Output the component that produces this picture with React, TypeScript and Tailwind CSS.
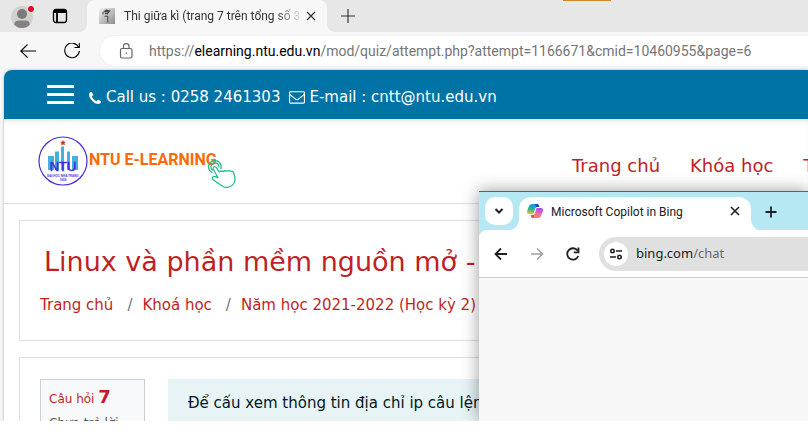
import type { ReactNode } from "react";

function Icon({ className, children, width = 1.2 }: { className: string; children: ReactNode; width?: number }) {
  return (
    <svg className={className} viewBox="0 0 16 16" fill="none" stroke="currentColor" strokeWidth={width} aria-hidden="true">
      {children}
    </svg>
  );
}

function PhoneIcon() {
  return (
    <svg className="ml-[15px] h-3 w-3 shrink-0" viewBox="0 0 1408 1408" fill="currentColor" aria-hidden="true">
      <path d="M1408 1112q0 27-10 70.500t-21 68.500q-21 50-122 106-94 51-186 51-27 0-53-3.500t-57.500-12.500-47-14.500-55.500-20.500-49-18q-98-35-175-83-127-79-264-216t-216-264q-48-77-83-175-3-9-18-49t-20.500-55.500-14.500-47-12.500-57.500-3.500-53q0-92 51-186 56-101 106-122 25-11 68.500-21t70.500-10q14 0 21 3 18 6 53 76 11 19 30 54t35 63.500 31 53.500q3 4 17.500 25t21.500 35.500 7 28.500q0 20-28.500 50t-62 55-62 53-28.500 46q0 9 5 22.500t8.500 20.500 14 24 11.500 19q76 137 174 235t235 174q2 1 19 11.500t24 14 20.500 8.500 22.500 5q18 0 46-28.500t53-62 55-62 50-28.500q14 0 28.500 7t35.500 21.500 25 17.500q25 15 53.500 31t63.500 35 54 30q70 35 76 53 3 7 3 21z" />
    </svg>
  );
}

function EnvelopeIcon() {
  return (
    <svg className="ml-[9px] h-4 w-4 shrink-0" viewBox="0 128 1792 1792" fill="currentColor" aria-hidden="true">
      <path d="M1664 1504v-768q-32 36-69 66-268 206-426 338-51 43-83 67t-86.500 48.500-102.500 24.500h-2q-48 0-102.500-24.500t-86.500-48.500-83-67q-158-132-426-338-37-30-69-66v768q0 13 9.500 22.500t22.500 9.500h1472q13 0 22.500-9.500t9.500-22.500zm0-1051v-24.500l-.5-13-3-12.500-5.500-9-9-7.500-14-2.500h-1472q-13 0-22.500 9.500t-9.500 22.500q0 168 147 284 193 152 401 317 6 5 35 29.500t46 37.500 44.500 31.500 50.500 27.500 43 9h2q20 0 43-9t50.500-27.500 44.500-31.500 46-37.500 35-29.500q208-165 401-317 54-43 100.500-115.500t46.500-131.500zm128-37v1088q0 66-47 113t-113 47h-1472q-66 0-113-47t-47-113v-1088q0-66 47-113t113-47h1472q66 0 113 47t47 113z" />
    </svg>
  );
}

function ProfileIcon() {
  return (
    <svg className="h-6 w-6" viewBox="0 0 24 24" aria-hidden="true">
      <circle cx="11" cy="13" r="11" fill="#d2d0cc" />
      <circle cx="11" cy="10" r="5" fill="#7c7a78" />
      <path d="M3 20.500 Q4 16.500 7 16.500 H15 Q18 16.500 19 20.500 Q15.500 24 11 24 Q6.500 24 3 20.500Z" fill="#85837f" />
      <circle cx="20" cy="5" r="3.600" fill="#f4f4f4" />
      <circle cx="20" cy="5" r="3" fill="#e00b1c" />
    </svg>
  );
}

function CapIcon() {
  return (
    <svg className="h-4 w-4 shrink-0" viewBox="0 0 16 16" aria-hidden="true">
      <defs>
        <linearGradient id="cap" x1="0" y1="0" x2="1" y2="1">
          <stop offset="0" stopColor="#f4f4f4" />
          <stop offset="1" stopColor="#8b8b8b" />
        </linearGradient>
      </defs>
      <rect width="16" height="16" fill="url(#cap)" />
      <path d="M4 3.500 L7 1.500 L12 2.500 L9.500 5Z M5.500 4.500 L9.500 5.300 L9 6.500 L6 6Z" fill="#4a4a4a" />
      <path d="M4 4v2.500M5.500 8.500q2-1 3.500.5l-.5 2.500.5 3" stroke="#5a5a5a" strokeWidth="1.200" fill="none" />
    </svg>
  );
}

function NtuLogo() {
  return (
    <svg className="h-[50px] w-[50px]" viewBox="0 0 50 50" aria-hidden="true">
      <circle cx="25" cy="25" r="24" fill="#fff" stroke="#4a2bdc" strokeWidth="1.200" />
      <path d="M10 20h6v14h-6zM17 15.500h4V34h-4zM23 10.500h3V34h-3zM29 15.500h3V34h-3zM34 20h6v14h-6z" fill="#45b0de" />
      <path d="M25 4.500l.7 1.500 1.700.1-1.300 1.100.4 1.700-1.500-.9-1.500.9.400-1.700-1.300-1.100 1.700-.1z" fill="#dd2a1c" stroke="#dd2a1c" strokeWidth="0.500" />
      <text x="25" y="34.500" textAnchor="middle" fontSize="13" fontFamily="Liberation Sans, sans-serif" fill="#3f2bdd" stroke="#3f2bdd" strokeWidth="0.500">NTU</text>
      <text x="25" y="41" textAnchor="middle" fontSize="3" fontWeight="700" fontFamily="Liberation Sans, sans-serif" fill="#4a30dc">ĐẠI HỌC NHA TRANG</text>
      <text x="25" y="45" textAnchor="middle" fontSize="3" fontWeight="700" fontFamily="Liberation Sans, sans-serif" fill="#4a30dc">1959</text>
    </svg>
  );
}

function TapIcon() {
  return (
    <svg className="absolute top-6 left-[119px] h-[30px] w-[30px]" viewBox="0 0 30 30" fill="none" stroke="#25bd8c" strokeWidth="1.300" strokeLinejoin="round" strokeLinecap="round" aria-hidden="true">
      <path d="M5 12.500A6.300 6.300 0 1 1 14 8.500M5.500 10A4 4 0 1 1 12 7" />
      <path d="M6.500 7.500q1.300-2 3 .2l2.700 4.300q2-1.700 4-.4 1.600-1.500 3.600-.4 1.600-1.300 3.500 0 2.500-.5 3.200 1.300l1.300 4q1.200 6-3.200 9.300-4.600 3-8.600.7L6.500 20q-2-2-.5-3.300 1.200-.8 5 1.100L6.400 9.500q-.5-1 .1-2z" />
    </svg>
  );
}

function CopilotIcon() {
  return (
    <svg className="h-4 w-4 shrink-0" viewBox="0 0 16 16" aria-hidden="true">
      <defs>
        <linearGradient id="cpl" x1="0.500" y1="0" x2="0.300" y2="1">
          <stop offset="0" stopColor="#1b91ee" />
          <stop offset="0.500" stopColor="#2cae9c" />
          <stop offset="1" stopColor="#edc51c" />
        </linearGradient>
        <linearGradient id="cpr" x1="0.700" y1="0" x2="0.300" y2="1">
          <stop offset="0" stopColor="#a34ce8" />
          <stop offset="0.500" stopColor="#ed67b4" />
          <stop offset="1" stopColor="#fb8b47" />
        </linearGradient>
      </defs>
      <path d="M4.500 1H10q1.300 0 1.800 1.500L12.300 4H10Q8.700 4 8.200 5.500L6.500 11H2Q0 11 0 9.500 0 8 1.800 3.500 2.700 1 4.500 1z" fill="url(#cpl)" />
      <path d="M8 1h2.200q1.300 0 1.700 1.500l.5 1.500H9.500z" fill="#1748c7" />
      <path d="M11.500 15H6q-1.300 0-1.800-1.500L3.700 12H6q1.300 0 1.800-1.500L9.500 5H14q2 0 2 1.500 0 1.500-1.800 6-.9 2.500-2.700 2.500z" fill="url(#cpr)" />
      <path d="M3.700 12H6q1 0 1.500-.8L6.500 15H6q-1.300 0-1.800-1.500z" fill="#ef4658" />
    </svg>
  );
}

function TabStrip() {
  return (
    <div className="relative flex h-8 shrink-0">
      <div className="absolute top-0 left-[563px] h-px w-12 bg-[#ce8629]" />
      <div className="flex w-[87px] shrink-0 items-center rounded-br-lg bg-[#e7e7e7] pl-[11px]">
        <button aria-label="Profile"><ProfileIcon /></button>
        <button aria-label="Tab actions" className="ml-[17px]">
          <Icon className="h-4 w-4" width={1.3}>
            <rect x="1.500" y="1.500" width="13" height="13" rx="2.500" />
            <path d="M2 4h12M2 2.500h12M5 4v10.500" strokeWidth="1.800" />
          </Icon>
        </button>
      </div>
      <div className="w-60 shrink-0 bg-[#e7e7e7]">
        <div className="flex h-full items-center rounded-t-lg bg-[#f7f7f7] pl-3">
          <CapIcon />
          <span className="ml-[9px] w-[176px] overflow-hidden whitespace-nowrap font-['Roboto',sans-serif] text-xs text-[#333] [mask-image:linear-gradient(to_right,black_150px,transparent_180px)]">
            Thi giữa kì (trang 7 trên tổng số 3
          </span>
          <button aria-label="Close tab" className="ml-[3px] text-[#333]">
            <Icon className="h-4 w-4"><path d="M4 4l8 8M12 4l-8 8" /></Icon>
          </button>
        </div>
      </div>
      <div className="flex flex-1 items-center rounded-bl-lg bg-[#e7e7e7] pl-[13px]">
        <button aria-label="New tab" className="text-[#333]">
          <Icon className="h-4 w-4"><path d="M8 1v14M1 8h14" /></Icon>
        </button>
      </div>
    </div>
  );
}

function Toolbar() {
  return (
    <div className="flex h-[38px] shrink-0 items-center pl-5">
      <button aria-label="Back">
        <Icon className="h-4 w-4" width={1.1}><path d="M16 8H.8M7.500 1.500L.8 8l6.700 6.500" /></Icon>
      </button>
      <button aria-label="Refresh" className="ml-7">
        <Icon className="h-4 w-4" width={1.1}><path d="M14.500 4A7.300 7.300 0 1 0 15.300 8M15.300 0v4.500h-4.800" /></Icon>
      </button>
      <div className="relative ml-5 flex h-[30px] flex-1 items-center overflow-hidden rounded-l-full bg-white pl-[18px] shadow-[0_0_2px_rgba(0,0,0,0.08)]">
        <Icon className="h-4 w-4 shrink-0 text-[#666]">
          <rect x="2.500" y="5.500" width="11.500" height="9.500" rx="1.500" />
          <path d="M5.500 5.500V3q0-2.300 2.700-2.300T11 3v2.500M7.500 10.200h1.500" />
        </Icon>
        <span className="ml-[15px] whitespace-nowrap font-['Roboto',sans-serif] text-sm text-[#757575]">
          https://<span className="text-black">elearning.ntu.edu.vn</span>/mod/quiz/attempt.php?attempt=1166671&amp;cmid=10460955&amp;page=6
        </span>
        <input aria-label="Address" className="absolute inset-0 bg-transparent outline-none" />
      </div>
    </div>
  );
}

function SiteHeader() {
  return (
    <header>
      <div className="flex h-[49px] items-center rounded-tl-lg bg-[#0073a6] pl-[43px] text-[15px] whitespace-nowrap text-white">
        <button aria-label="Menu" className="flex w-[27px] flex-col gap-[5px]">
          <span className="h-[3px] w-full bg-white" />
          <span className="h-[3px] w-full bg-white" />
          <span className="h-[3px] w-full bg-white" />
        </button>
        <p className="flex items-center pt-1.5">
          <PhoneIcon />
          <span className="ml-[5px]">Call us : 0258 2461303</span>
          <EnvelopeIcon />
          <span className="ml-1">E-mail : cntt@ntu.edu.vn</span>
        </p>
      </div>
      <div className="flex h-[85px] items-center overflow-hidden border-b border-[#dedede] pl-[34px] shadow-[inset_0_4px_4px_-2px_rgba(0,0,0,0.12)]">
        <a href="#home" aria-label="NTU E-Learning" className="relative flex shrink-0 items-center">
          <NtuLogo />
          <span className="relative flex h-[50px] w-[151px] items-center pb-0.5 pl-px font-['Roboto',sans-serif] text-base font-bold whitespace-nowrap text-[#fb6a0a]">
            NTU E-LEARNING
            <TapIcon />
          </span>
        </a>
        <nav className="ml-[333px] flex shrink-0 gap-[30px] pt-2.5 text-lg text-[#c01f25]">
          <a href="#home">Trang chủ</a>
          <a href="#courses">Khóa học</a>
          <a href="#t">T</a>
        </nav>
      </div>
    </header>
  );
}

function CourseHeading() {
  return (
    <section className="border border-[#dedede] px-5 pt-[21px] pb-[23px] text-[#c01f25]">
      <h1 className="pl-1 text-[27px] leading-10 whitespace-nowrap">Linux và phần mềm nguồn mở -</h1>
      <nav aria-label="Breadcrumb" className="mt-[11px] flex text-[15px] leading-6 whitespace-nowrap">
        <a href="#home">Trang chủ</a>
        <span className="pr-[10px] pl-[14px] text-[#6c757d]">/</span>
        <a href="#courses">Khoá học</a>
        <span className="pr-[10px] pl-[14px] text-[#6c757d]">/</span>
        <a href="#year">Năm học 2021-2022 (Học kỳ 2)</a>
      </nav>
    </section>
  );
}

function Question() {
  return (
    <section className="mt-4 flex flex-1 items-stretch gap-[23px] border border-b-0 border-[#dedede] px-5 pt-[21px]">
      <div className="w-[105px] shrink-0 border border-b-0 border-[#cad0d7] bg-[#f8f9fa] px-2 pt-[5px] text-xs">
        <h2 className="leading-6 whitespace-nowrap text-[#c01f25]">
          Câu hỏi <b className="text-lg leading-6">7</b>
        </h2>
        <p className="mt-[2px] leading-5 whitespace-nowrap text-[#555]">Chưa trả lời</p>
      </div>
      <div className="flex-1 bg-[#e7f3f5] px-5 pt-3 text-[15px] leading-6 whitespace-nowrap text-[#001a1e]">
        Để cấu xem thông tin địa chỉ ip câu lệnh
      </div>
    </section>
  );
}

function ChatWindow() {
  return (
    <div className="absolute top-[191px] right-0 bottom-0 left-[479px] flex flex-col border-t border-[#4d6670] bg-[#f7f7f7] shadow-[0_0_16px_rgba(0,0,0,0.4)]">
      <div className="flex h-[39px] shrink-0 bg-white">
        <div className="flex w-10 shrink-0 rounded-br-xl bg-[#b6e8f3] pt-[5px] pl-[6px]">
          <button aria-label="Search tabs" className="flex h-7 w-7 items-center justify-center rounded-[10px] bg-white">
            <Icon className="h-4 w-4 text-[#202124]" width={2}><path d="M4.500 6L8 9.500 11.500 6" /></Icon>
          </button>
        </div>
        <div className="w-[232px] shrink-0 bg-[#b6e8f3] pt-[5px]">
          <div className="flex h-full items-center rounded-t-xl bg-white pr-2 pb-[6px] pl-2">
            <CopilotIcon />
            <span className="ml-2 flex-1 pt-0.5 font-['Roboto',sans-serif] text-xs whitespace-nowrap text-[#202124]">Microsoft Copilot in Bing</span>
            <button aria-label="Close tab" className="text-[#202124]">
              <Icon className="h-4 w-4" width={1.6}><path d="M4 4l8 8M12 4l-8 8" /></Icon>
            </button>
          </div>
        </div>
        <div className="flex flex-1 items-center rounded-bl-xl bg-[#b6e8f3] pl-3">
          <button aria-label="New tab" className="text-[#202124]">
            <Icon className="h-4 w-4" width={1.8}><path d="M8 2.500v11M2.500 8h11" /></Icon>
          </button>
        </div>
      </div>
      <div className="-mt-px bg-[#b6e8f3]">
        <div className="flex h-12 items-center rounded-tl-lg border-b border-[#cfcfcf] bg-white pl-[14px] text-[#202124]">
          <button aria-label="Back">
            <Icon className="h-4 w-4" width={1.8}><path d="M14 8H2.500M8 2.500L2.500 8 8 13.500" /></Icon>
          </button>
          <button aria-label="Forward" className="ml-5 text-[#a0a0a0]">
            <Icon className="h-4 w-4" width={1.600}><path d="M2 8h11.500M8 2.500L13.500 8 8 13.500" /></Icon>
          </button>
          <button aria-label="Reload" className="ml-5">
            <Icon className="h-4 w-4" width={1.800}><path d="M13.300 10A5.700 5.700 0 1 1 12.500 4.500M13.500 1.500v4.800H8.800" /></Icon>
          </button>
          <div className="relative ml-[18px] flex h-[34px] flex-1 items-center overflow-hidden rounded-l-full bg-[#e0e0e0] pl-[5px]">
            <span className="flex h-6 w-6 shrink-0 items-center justify-center rounded-full bg-white">
              <Icon className="h-4 w-4" width={1.600}>
                <circle cx="4.500" cy="5" r="1.700" />
                <circle cx="11.500" cy="11" r="1.700" />
                <path d="M8 5h6M2 11h6" />
              </Icon>
            </span>
            <span className="ml-2 font-['Noto_Sans',sans-serif] text-[13px] whitespace-nowrap text-[#6a6a6a]">
              <span className="text-[#202124]">bing.com</span>/chat
            </span>
            <input aria-label="Address" className="absolute inset-0 bg-transparent outline-none" />
          </div>
        </div>
      </div>
    </div>
  );
}

export default function App() {
  return (
    <div className="flex h-screen flex-col bg-white pb-[19px]">
      <div className="relative flex min-h-0 flex-1 flex-col overflow-hidden bg-[#f7f7f7]">
        <TabStrip />
        <Toolbar />
        <main className="ml-1 flex min-h-0 flex-1 flex-col rounded-tl-lg bg-white font-['DejaVu_Sans',sans-serif] shadow-[0_0_3px_rgba(0,0,0,0.3)]">
          <SiteHeader />
          <div className="flex min-h-0 flex-1 flex-col px-[15px] pt-4">
            <CourseHeading />
            <Question />
          </div>
        </main>
        <ChatWindow />
      </div>
    </div>
  );
}
